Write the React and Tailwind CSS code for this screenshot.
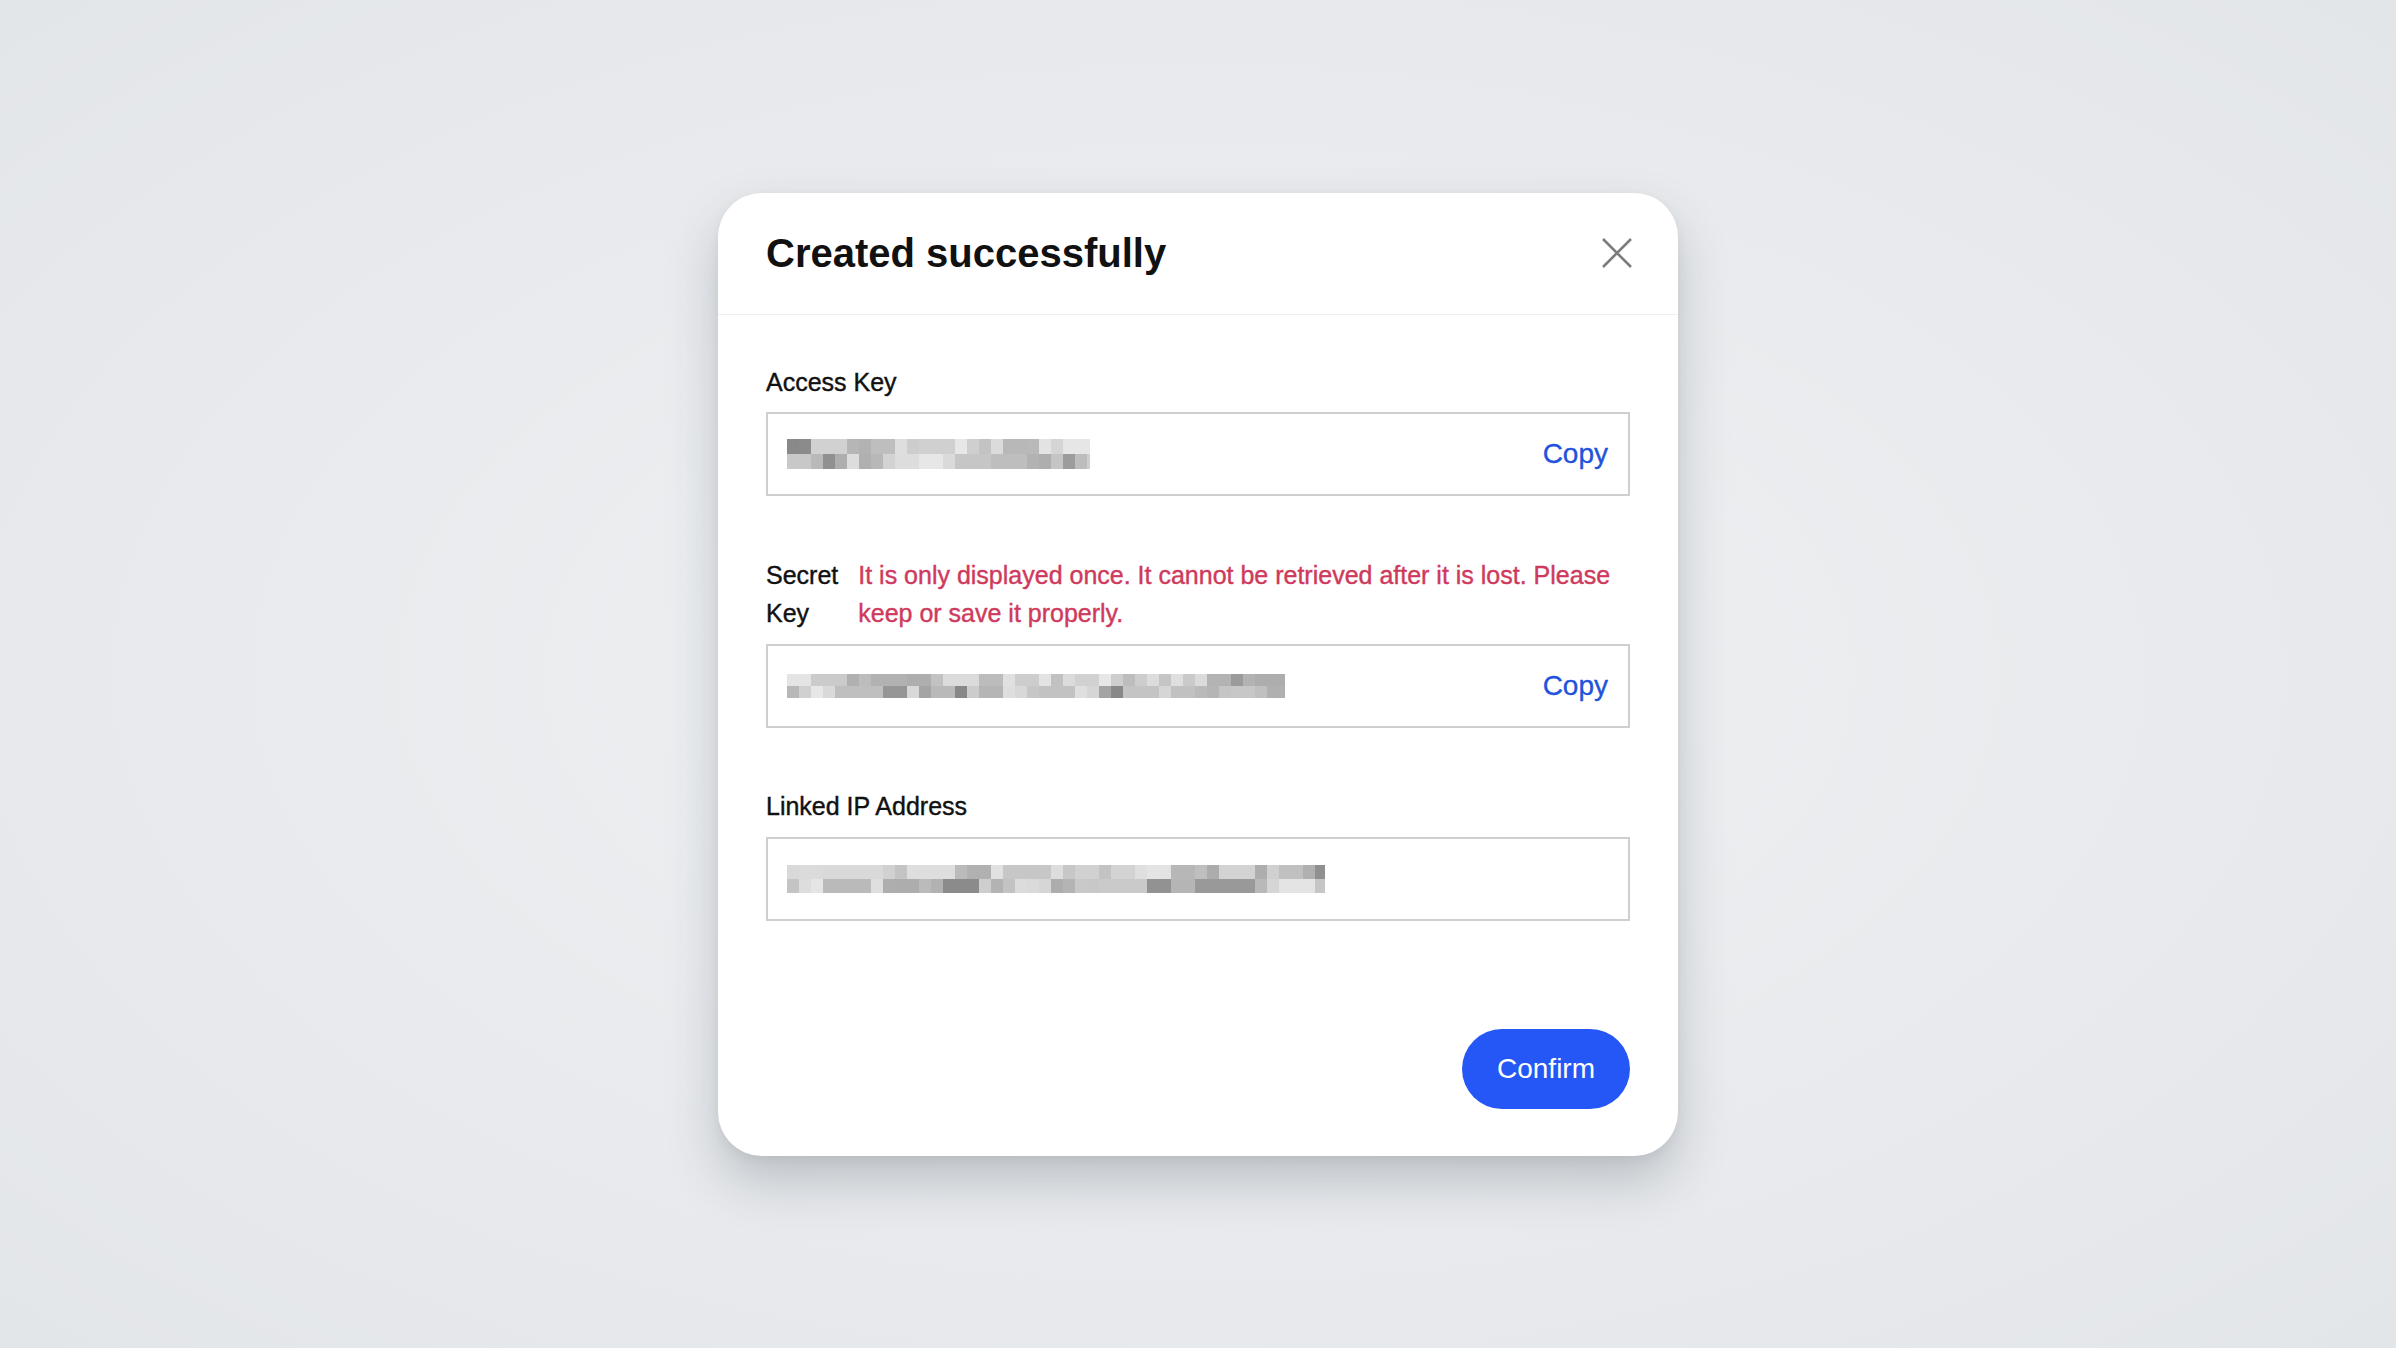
import React from 'react';

// tiny seeded random so the blurred values look the same every render
function rng(seed) {
  let s = seed;
  return () => {
    s = (s * 9301 + 49297) % 233280;
    return s / 233280;
  };
}

function Mosaic({ width, height, seed }) {
  const rand = rng(seed);
  const cell = 12;
  const rows = 2;
  const cols = Math.ceil(width / cell);
  const rects = [];
  for (let r = 0; r < rows; r++) {
    let prev = 200;
    for (let c = 0; c < cols; c++) {
      let g = prev;
      if (rand() > 0.35) {
        const t = rand();
        g = t > 0.9 ? 135 + Math.floor(rand() * 30) : 172 + Math.floor(rand() * 60);
      }
      prev = g;
      rects.push(
        <rect
          key={`${r}-${c}`}
          x={c * cell}
          y={(r * height) / rows}
          width={cell + 0.5}
          height={height / rows + 0.5}
          fill={`rgb(${g},${g},${g})`}
        />
      );
    }
  }
  return (
    <svg width={width} height={height} viewBox={`0 0 ${width} ${height}`} className="block shrink-0">
      {rects}
    </svg>
  );
}

function KeyField({ mosaic, copy }) {
  return (
    <div className="flex h-[84px] items-center justify-between border-2 border-[#cfcfcf] bg-white pl-[19px] pr-[20px]">
      {mosaic}
      {copy && (
        <button className="text-[28px] leading-none text-[#2152dc] [-webkit-text-stroke:0.3px_currentColor]">Copy</button>
      )}
    </div>
  );
}

export default function App() {
  return (
    <div className="flex min-h-screen w-full items-center justify-center bg-[radial-gradient(ellipse_at_center,#eff1f3_0%,#e8eaed_60%,#e3e6e9_100%)] font-['Liberation_Sans',Arial,sans-serif]">
      <div className="w-[960px] overflow-hidden rounded-[44px] bg-white shadow-[0_26px_50px_rgba(60,70,85,0.25),0_4px_12px_rgba(0,0,0,0.05)]">
        {/* header */}
        <div className="flex h-[122px] items-center justify-between border-b border-[#efefef] px-12">
          <h1 className="text-[40px] font-bold leading-[48px] text-[#111]">Created successfully</h1>
          <button className="mr-[-3px] text-[#7c7c7c]">
            <svg width="32" height="32" viewBox="0 0 32 32" fill="none" stroke="currentColor" strokeWidth="2.6">
              <path d="M2 2 L30 30 M30 2 L2 30" />
            </svg>
          </button>
        </div>

        {/* body */}
        <div className="px-12 pt-12 pb-[47px]">
          <div className="mb-[11px] text-[25px] leading-[38px] text-[#111] [-webkit-text-stroke:0.4px_currentColor]">Access Key</div>
          <KeyField copy mosaic={<Mosaic width={303} height={30} seed={17} />} />

          <div className="mt-[60px] mb-[12px] flex gap-5 text-[25px] leading-[38px] [-webkit-text-stroke:0.4px_currentColor]">
            <span className="w-min shrink-0 text-[#111]">Secret Key</span>
            <span className="text-[#cf3a5c]">
              It is only displayed once. It cannot be retrieved after it is lost. Please keep or save it properly.
            </span>
          </div>
          <KeyField copy mosaic={<Mosaic width={498} height={24} seed={91} />} />

          <div className="mt-[59px] mb-[12px] text-[25px] leading-[38px] text-[#111] [-webkit-text-stroke:0.4px_currentColor]">Linked IP Address</div>
          <KeyField mosaic={<Mosaic width={538} height={28} seed={43} />} />

          <div className="mt-[108px] flex justify-end">
            <button className="h-20 w-[168px] rounded-full bg-[#2457f5] text-[28px] text-white">Confirm</button>
          </div>
        </div>
      </div>
    </div>
  );
}
